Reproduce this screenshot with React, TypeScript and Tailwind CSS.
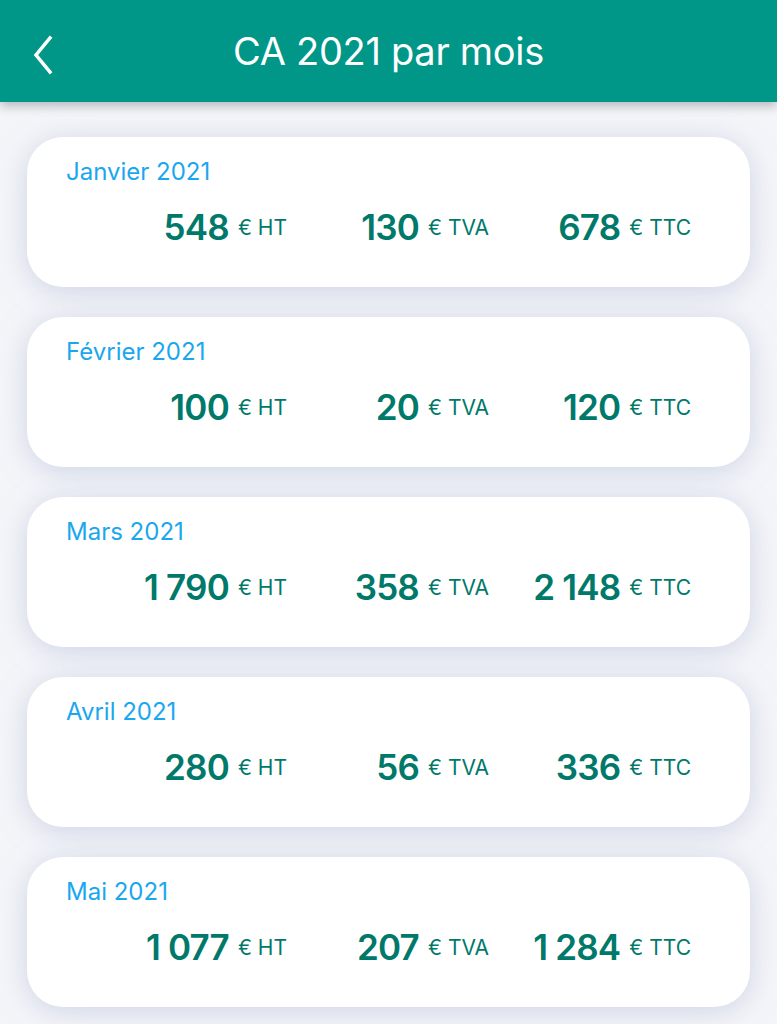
import React from "react";

type Month = { label: string; ht: string; tva: string; ttc: string };

const MONTHS: Month[] = [
  { label: "Janvier 2021", ht: "548", tva: "130", ttc: "678" },
  { label: "Février 2021", ht: "100", tva: "20", ttc: "120" },
  { label: "Mars 2021", ht: "1 790", tva: "358", ttc: "2 148" },
  { label: "Avril 2021", ht: "280", tva: "56", ttc: "336" },
  { label: "Mai 2021", ht: "1 077", tva: "207", ttc: "1 284" },
];

function Amount({ value, unit }: { value: string; unit: string }) {
  return (
    <div className="flex items-center justify-end gap-[9px]">
      <span className="text-[35px] font-semibold tracking-[-0.8px] text-[#00796b]">{value}</span>
      <span className="text-[21px] leading-none text-[#00796b]">€ {unit}</span>
    </div>
  );
}

function MonthCard({ m }: { m: Month }) {
  return (
    <div className="h-[150px] rounded-[36px] bg-white pt-[18px] shadow-[0_4px_28px_rgba(180,190,215,0.6)]">
      <div className="pl-[39px] text-[24px] leading-[34px] text-[#1aa7ee]">{m.label}</div>
      <div className="mt-[16px] grid grid-cols-3 pl-[58px] pr-[59px] leading-[44px]">
        <Amount value={m.ht} unit="HT" />
        <Amount value={m.tva} unit="TVA" />
        <Amount value={m.ttc} unit="TTC" />
      </div>
    </div>
  );
}

export default function App() {
  return (
    <div
      className="min-h-[1024px] w-[777px] bg-[#f4f5f9]"
      style={{ fontFamily: "Inter, 'Noto Sans', sans-serif" }}
    >
      <header className="relative z-10 flex h-[102px] items-center justify-center bg-[#009688] shadow-[0_4px_10px_rgba(0,0,0,0.25)]">
        <button className="absolute left-[26px] top-[31px] p-1">
          <svg width="28" height="40" viewBox="0 0 28 40" fill="none">
            <path d="M20 3 L6 20 L20 37" stroke="white" strokeWidth="3.5" strokeLinecap="square" />
          </svg>
        </button>
        <h1 className="text-[38px] font-normal tracking-[-0.3px] text-white">CA 2021 par mois</h1>
      </header>
      <main className="flex flex-col gap-[30px] px-[27px] pt-[35px] pb-[20px]">
        {MONTHS.map((m) => (
          <MonthCard key={m.label} m={m} />
        ))}
      </main>
    </div>
  );
}
